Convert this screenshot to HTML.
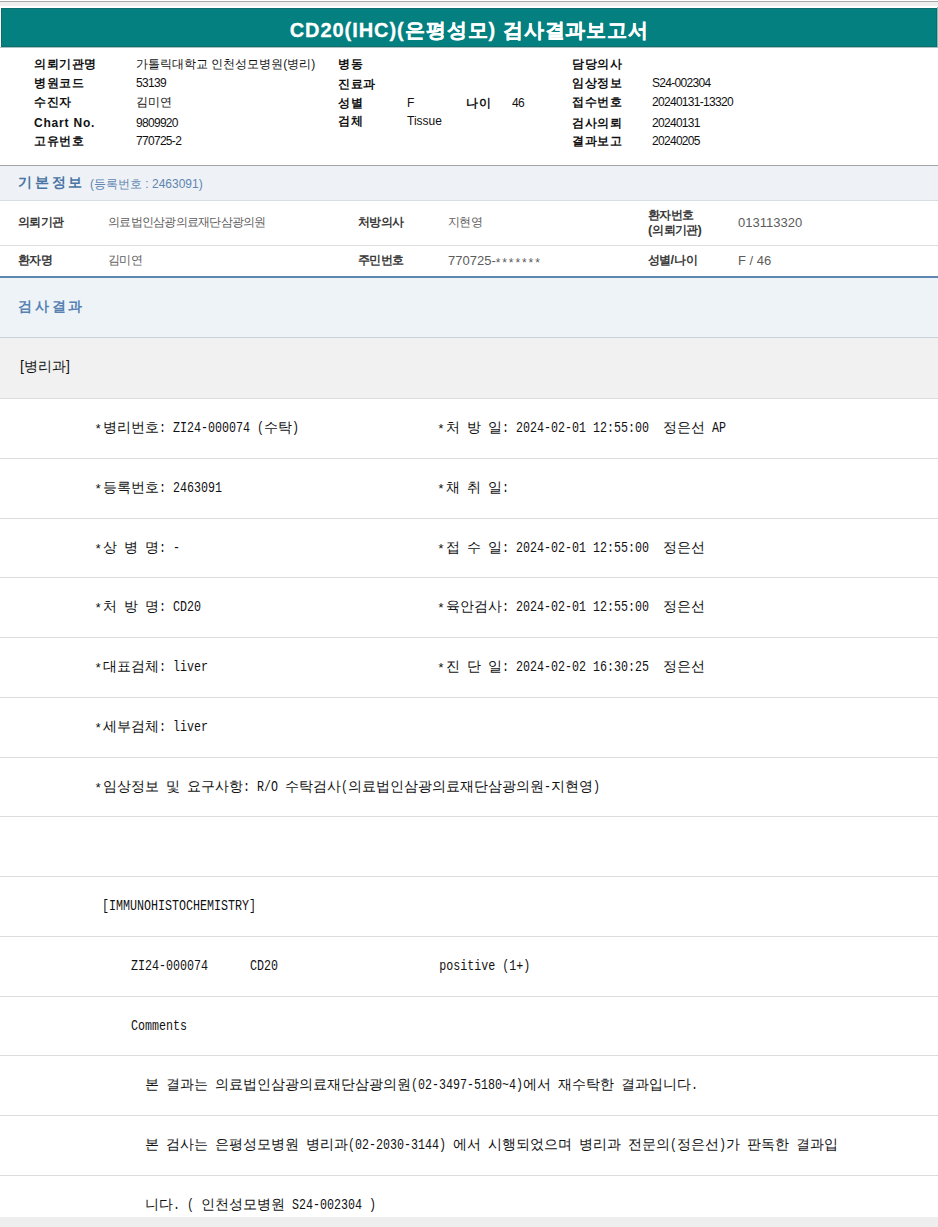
<!DOCTYPE html>
<html><head><meta charset="utf-8">
<style>
html,body{margin:0;padding:0;background:#fff;width:938px;height:1227px;overflow:hidden;position:relative}
body{font-family:"Liberation Sans",sans-serif;color:#000}
.a{position:absolute;white-space:pre;line-height:1}
.bg{position:absolute;left:0;width:938px}
.hl{font-size:12px;font-weight:bold;color:#111;letter-spacing:0.5px}
.hv{font-size:12px;color:#111}
.hn{font-size:12px;color:#111;letter-spacing:-0.7px}
.m{position:absolute;font-family:"Liberation Mono",monospace;font-size:13px;letter-spacing:-0.8px;white-space:pre;line-height:1;color:#111}
.m .k{font-size:14px;letter-spacing:0}
.m .L{display:inline-block;font-size:15.5px;letter-spacing:0;overflow:visible}
.m .L>span{display:inline-block;transform:scaleX(0.753);transform-origin:0 0}
.m .L>span.st{font-size:13px;transform:translate(-1.8px,0.5px)}
.bl{font-size:13px;font-weight:600;color:#3a3a3a}
.bl .k{font-size:12px;letter-spacing:-0.7px}
.bv{font-size:13px;color:#5c5c5c}
.bv .k{font-size:12px;letter-spacing:-0.75px}
</style></head><body>
<div class="bg" style="top:1px;height:1px;background:#a9a9a9;left:0px;width:938px"></div>
<div class="bg" style="top:2px;height:4px;background:#efefef;left:0px;width:938px"></div>
<div style="position:absolute;left:1px;top:8px;width:934px;height:37px;background:#03807f;border:1px solid #0e6e6d"></div>
<div class="bg" style="top:47px;height:1px;background:#a9c2c2;left:0px;width:938px"></div>
<div class="bg" style="top:7px;height:40px;background:#7dbdbd;left:937px;width:1px"></div>
<div class="a" style="left:0;top:20px;width:938px;text-align:center;color:#fff;font-size:20px;font-weight:bold;-webkit-text-stroke:0.3px #fff;letter-spacing:0.95px;text-indent:0.95px">CD20(IHC)(은평성모) 검사결과보고서</div>
<div class="a hl" style="left:34px;top:58px;"><span class="k">의뢰기관명</span></div>
<div class="a hl" style="left:34px;top:77px;"><span class="k">병원코드</span></div>
<div class="a hl" style="left:34px;top:96px;"><span class="k">수진자</span></div>
<div class="a hl" style="left:34px;top:117px;letter-spacing:0.8px">Chart No.</div>
<div class="a hl" style="left:34px;top:135px;"><span class="k">고유번호</span></div>
<div class="a hv" style="left:136px;top:58px;"><span class="k">가톨릭대학교</span> <span class="k">인천성모병원</span>(<span class="k">병리</span>)</div>
<div class="a hn" style="left:136px;top:77px;">53139</div>
<div class="a hv" style="left:136px;top:96px;"><span class="k">김미연</span></div>
<div class="a hn" style="left:136px;top:117px;">9809920</div>
<div class="a hn" style="left:136px;top:135px;">770725-2</div>
<div class="a hl" style="left:338px;top:58px;"><span class="k">병동</span></div>
<div class="a hl" style="left:338px;top:78px;"><span class="k">진료과</span></div>
<div class="a hl" style="left:338px;top:97px;"><span class="k">성별</span></div>
<div class="a hl" style="left:338px;top:115px;"><span class="k">검체</span></div>
<div class="a hv" style="left:407px;top:97px;">F</div>
<div class="a hl" style="left:466px;top:97px;"><span class="k">나이</span></div>
<div class="a hn" style="left:512px;top:97px;">46</div>
<div class="a hv" style="left:407px;top:115px;">Tissue</div>
<div class="a hl" style="left:572px;top:58px;"><span class="k">담당의사</span></div>
<div class="a hl" style="left:572px;top:77px;"><span class="k">임상정보</span></div>
<div class="a hl" style="left:572px;top:96px;"><span class="k">접수번호</span></div>
<div class="a hl" style="left:572px;top:117px;"><span class="k">검사의뢰</span></div>
<div class="a hl" style="left:572px;top:135px;"><span class="k">결과보고</span></div>
<div class="a hn" style="left:652px;top:77px;">S24-002304</div>
<div class="a hn" style="left:652px;top:96px;">20240131-13320</div>
<div class="a hn" style="left:652px;top:117px;">20240131</div>
<div class="a hn" style="left:652px;top:135px;">20240205</div>
<div class="bg" style="top:165px;height:1px;background:#a4a4a4;left:0px;width:938px"></div>
<div class="bg" style="top:166px;height:34px;background:#eef2f6;left:0px;width:938px"></div>
<div class="bg" style="top:200px;height:1px;background:#d9dee4;left:0px;width:938px"></div>
<div class="a" style="left:18px;top:175px;font-size:14px;font-weight:600;color:#4a74a4;letter-spacing:2.8px">기본정보</div>
<div class="a" style="left:90px;top:178px;font-size:12px;color:#6085b0">(등록번호 : 2463091)</div>
<div class="bg" style="top:245px;height:1px;background:#dedede;left:0px;width:938px"></div>
<div class="a bl" style="left:18px;top:215px;"><span class="k">의뢰기관</span></div>
<div class="a bv" style="left:108px;top:215px;"><span class="k">의료법인삼광의료재단삼광의원</span></div>
<div class="a bl" style="left:358px;top:215px;"><span class="k">처방의사</span></div>
<div class="a bv" style="left:448px;top:215px;"><span class="k">지현영</span></div>
<div class="a bl" style="left:648px;top:208px;"><span class="k">환자번호</span></div>
<div class="a bl" style="left:648px;top:222.5px;">(<span class="k">의뢰기관</span>)</div>
<div class="a bv" style="left:738px;top:216px;">013113320</div>
<div class="a bl" style="left:18px;top:253px;"><span class="k">환자명</span></div>
<div class="a bv" style="left:108px;top:253px;"><span class="k">김미연</span></div>
<div class="a bl" style="left:358px;top:253px;"><span class="k">주민번호</span></div>
<div class="a bv" style="left:448px;top:254px">770725-<span style="display:inline-block;letter-spacing:1.9px;font-size:12px;transform:translateY(2px)">*******</span></div>
<div class="a bl" style="left:648px;top:253px;"><span class="k">성별</span>/<span class="k">나이</span></div>
<div class="a bv" style="left:738px;top:254px;">F / 46</div>
<div class="bg" style="top:276px;height:2px;background:#5d87b1;left:0px;width:938px"></div>
<div class="bg" style="top:278px;height:59px;background:#eef3f7;left:0px;width:938px"></div>
<div class="bg" style="top:337px;height:1px;background:#c9d2db;left:0px;width:938px"></div>
<div class="a" style="left:18px;top:299px;font-size:14px;font-weight:600;color:#5581b3;letter-spacing:2.8px">검사결과</div>
<div class="bg" style="top:338px;height:60px;background:#f1f1f1;left:0px;width:938px"></div>
<div class="a" style="left:20px;top:359px;font-size:14px;color:#111">[병리과]</div>
<div class="bg" style="top:398.00px;height:1px;background:#dddddd;left:0px;width:938px"></div>
<div class="m" style="left:96px;top:421.00px"><span class="L" style="width:7px"><span class="st">*</span></span><span class="k">병리번호</span><span class="L" style="width:105px"><span>: ZI24-000074 (</span></span><span class="k">수탁</span><span class="L" style="width:7px"><span>)</span></span></div>
<div class="m" style="left:438.8px;top:421.00px"><span class="L" style="width:7px"><span class="st">*</span></span><span class="k">처</span><span class="L" style="width:7px"><span> </span></span><span class="k">방</span><span class="L" style="width:7px"><span> </span></span><span class="k">일</span><span class="L" style="width:161px"><span>: 2024-02-01 12:55:00  </span></span><span class="k">정은선</span><span class="L" style="width:21px"><span> AP</span></span></div>
<div class="bg" style="top:457.77px;height:1px;background:#dddddd;left:0px;width:938px"></div>
<div class="m" style="left:96px;top:480.77px"><span class="L" style="width:7px"><span class="st">*</span></span><span class="k">등록번호</span><span class="L" style="width:63px"><span>: 2463091</span></span></div>
<div class="m" style="left:438.8px;top:480.77px"><span class="L" style="width:7px"><span class="st">*</span></span><span class="k">채</span><span class="L" style="width:7px"><span> </span></span><span class="k">취</span><span class="L" style="width:7px"><span> </span></span><span class="k">일</span><span class="L" style="width:7px"><span>:</span></span></div>
<div class="bg" style="top:517.54px;height:1px;background:#dddddd;left:0px;width:938px"></div>
<div class="m" style="left:96px;top:540.54px"><span class="L" style="width:7px"><span class="st">*</span></span><span class="k">상</span><span class="L" style="width:7px"><span> </span></span><span class="k">병</span><span class="L" style="width:7px"><span> </span></span><span class="k">명</span><span class="L" style="width:21px"><span>: -</span></span></div>
<div class="m" style="left:438.8px;top:540.54px"><span class="L" style="width:7px"><span class="st">*</span></span><span class="k">접</span><span class="L" style="width:7px"><span> </span></span><span class="k">수</span><span class="L" style="width:7px"><span> </span></span><span class="k">일</span><span class="L" style="width:161px"><span>: 2024-02-01 12:55:00  </span></span><span class="k">정은선</span></div>
<div class="bg" style="top:577.31px;height:1px;background:#dddddd;left:0px;width:938px"></div>
<div class="m" style="left:96px;top:600.31px"><span class="L" style="width:7px"><span class="st">*</span></span><span class="k">처</span><span class="L" style="width:7px"><span> </span></span><span class="k">방</span><span class="L" style="width:7px"><span> </span></span><span class="k">명</span><span class="L" style="width:42px"><span>: CD20</span></span></div>
<div class="m" style="left:438.8px;top:600.31px"><span class="L" style="width:7px"><span class="st">*</span></span><span class="k">육안검사</span><span class="L" style="width:161px"><span>: 2024-02-01 12:55:00  </span></span><span class="k">정은선</span></div>
<div class="bg" style="top:637.08px;height:1px;background:#dddddd;left:0px;width:938px"></div>
<div class="m" style="left:96px;top:660.08px"><span class="L" style="width:7px"><span class="st">*</span></span><span class="k">대표검체</span><span class="L" style="width:49px"><span>: liver</span></span></div>
<div class="m" style="left:438.8px;top:660.08px"><span class="L" style="width:7px"><span class="st">*</span></span><span class="k">진</span><span class="L" style="width:7px"><span> </span></span><span class="k">단</span><span class="L" style="width:7px"><span> </span></span><span class="k">일</span><span class="L" style="width:161px"><span>: 2024-02-02 16:30:25  </span></span><span class="k">정은선</span></div>
<div class="bg" style="top:696.85px;height:1px;background:#dddddd;left:0px;width:938px"></div>
<div class="m" style="left:96px;top:719.85px"><span class="L" style="width:7px"><span class="st">*</span></span><span class="k">세부검체</span><span class="L" style="width:49px"><span>: liver</span></span></div>
<div class="bg" style="top:756.62px;height:1px;background:#dddddd;left:0px;width:938px"></div>
<div class="m" style="left:96px;top:779.62px"><span class="L" style="width:7px"><span class="st">*</span></span><span class="k">임상정보</span><span class="L" style="width:7px"><span> </span></span><span class="k">및</span><span class="L" style="width:7px"><span> </span></span><span class="k">요구사항</span><span class="L" style="width:42px"><span>: R/O </span></span><span class="k">수탁검사</span><span class="L" style="width:7px"><span>(</span></span><span class="k">의료법인삼광의료재단삼광의원</span><span class="L" style="width:7px"><span>-</span></span><span class="k">지현영</span><span class="L" style="width:7px"><span>)</span></span></div>
<div class="bg" style="top:816.38px;height:1px;background:#dddddd;left:0px;width:938px"></div>
<div class="bg" style="top:876.15px;height:1px;background:#dddddd;left:0px;width:938px"></div>
<div class="m" style="left:102px;top:899.15px"><span class="L" style="width:154px"><span>[IMMUNOHISTOCHEMISTRY]</span></span></div>
<div class="bg" style="top:935.92px;height:1px;background:#dddddd;left:0px;width:938px"></div>
<div class="m" style="left:130.5px;top:958.92px"><span class="L" style="width:399px"><span>ZI24-000074      CD20                       positive (1+)</span></span></div>
<div class="bg" style="top:995.69px;height:1px;background:#dddddd;left:0px;width:938px"></div>
<div class="m" style="left:130.5px;top:1018.69px"><span class="L" style="width:56px"><span>Comments</span></span></div>
<div class="bg" style="top:1055.46px;height:1px;background:#dddddd;left:0px;width:938px"></div>
<div class="m" style="left:144.5px;top:1078.46px"><span class="k">본</span><span class="L" style="width:7px"><span> </span></span><span class="k">결과는</span><span class="L" style="width:7px"><span> </span></span><span class="k">의료법인삼광의료재단삼광의원</span><span class="L" style="width:112px"><span>(02-3497-5180~4)</span></span><span class="k">에서</span><span class="L" style="width:7px"><span> </span></span><span class="k">재수탁한</span><span class="L" style="width:7px"><span> </span></span><span class="k">결과입니다</span><span class="L" style="width:7px"><span>.</span></span></div>
<div class="bg" style="top:1115.23px;height:1px;background:#dddddd;left:0px;width:938px"></div>
<div class="m" style="left:144.5px;top:1138.23px"><span class="k">본</span><span class="L" style="width:7px"><span> </span></span><span class="k">검사는</span><span class="L" style="width:7px"><span> </span></span><span class="k">은평성모병원</span><span class="L" style="width:7px"><span> </span></span><span class="k">병리과</span><span class="L" style="width:105px"><span>(02-2030-3144) </span></span><span class="k">에서</span><span class="L" style="width:7px"><span> </span></span><span class="k">시행되었으며</span><span class="L" style="width:7px"><span> </span></span><span class="k">병리과</span><span class="L" style="width:7px"><span> </span></span><span class="k">전문의</span><span class="L" style="width:7px"><span>(</span></span><span class="k">정은선</span><span class="L" style="width:7px"><span>)</span></span><span class="k">가</span><span class="L" style="width:7px"><span> </span></span><span class="k">판독한</span><span class="L" style="width:7px"><span> </span></span><span class="k">결과입</span></div>
<div class="bg" style="top:1175.00px;height:1px;background:#dddddd;left:0px;width:938px"></div>
<div class="m" style="left:144.5px;top:1198.00px"><span class="k">니다</span><span class="L" style="width:28px"><span>. ( </span></span><span class="k">인천성모병원</span><span class="L" style="width:91px"><span> S24-002304 )</span></span></div>
<div class="bg" style="top:1217px;height:10px;background:#eeeeee;left:0px;width:938px"></div>
</body></html>
